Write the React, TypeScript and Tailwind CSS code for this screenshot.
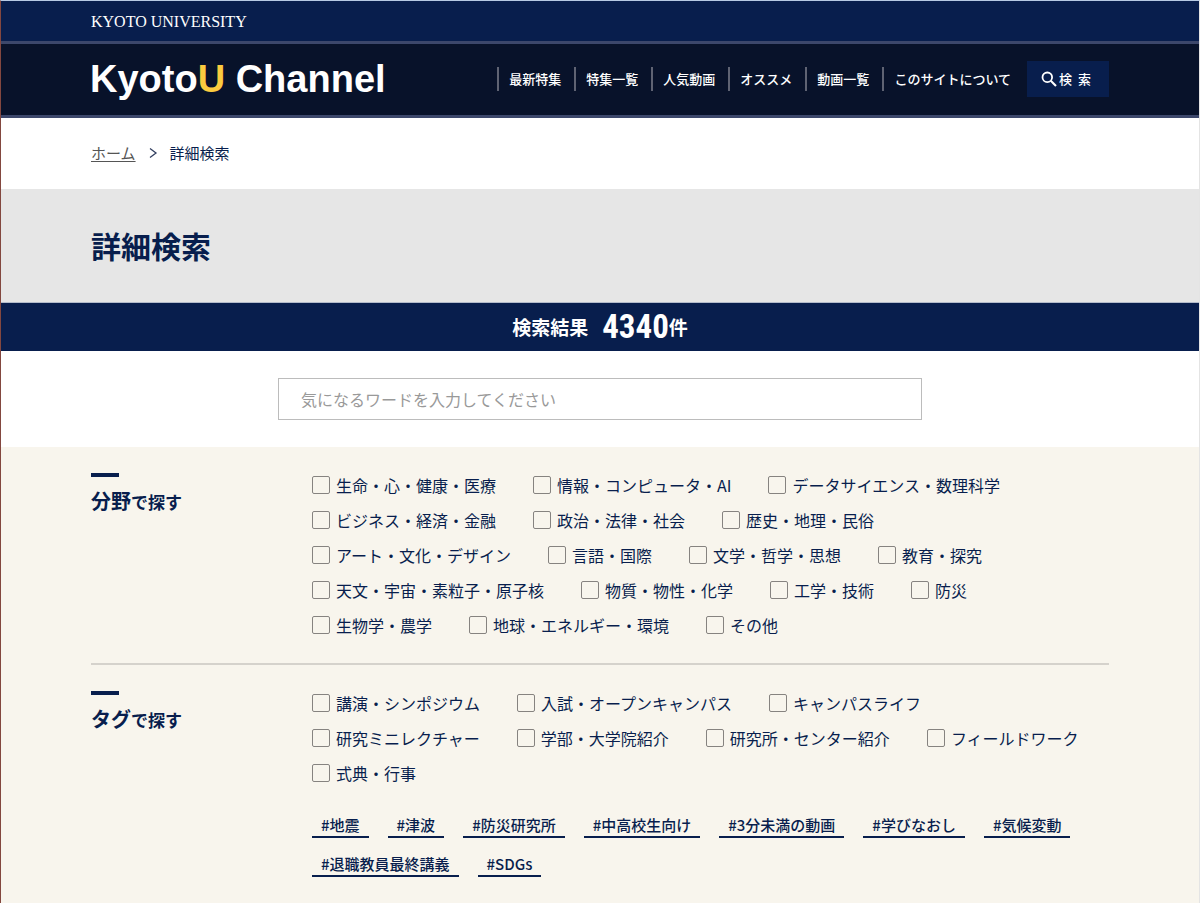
const navItems = [
  "最新特集",
  "特集一覧",
  "人気動画",
  "オススメ",
  "動画一覧",
  "このサイトについて",
];

const fields = [
  "生命・心・健康・医療",
  "情報・コンピュータ・AI",
  "データサイエンス・数理科学",
  "ビジネス・経済・金融",
  "政治・法律・社会",
  "歴史・地理・民俗",
  "アート・文化・デザイン",
  "言語・国際",
  "文学・哲学・思想",
  "教育・探究",
  "天文・宇宙・素粒子・原子核",
  "物質・物性・化学",
  "工学・技術",
  "防災",
  "生物学・農学",
  "地球・エネルギー・環境",
  "その他",
];

const categories = [
  "講演・シンポジウム",
  "入試・オープンキャンパス",
  "キャンパスライフ",
  "研究ミニレクチャー",
  "学部・大学院紹介",
  "研究所・センター紹介",
  "フィールドワーク",
  "式典・行事",
];

const hashtags = [
  "#地震",
  "#津波",
  "#防災研究所",
  "#中高校生向け",
  "#3分未満の動画",
  "#学びなおし",
  "#気候変動",
  "#退職教員最終講義",
  "#SDGs",
];

function CheckList({ items, name }: { items: string[]; name: string }) {
  return (
    <ul className="flex flex-wrap gap-x-[37px] gap-y-[11px]">
      {items.map((item) => (
        <li key={item}>
          <label className="flex items-center gap-1.5 text-base leading-6 whitespace-nowrap">
            <input
              type="checkbox"
              name={name}
              value={item}
              className="size-[18px] shrink-0 appearance-none rounded-[2px] border border-[#868380] checked:bg-[#081e4d]"
            />
            {item}
          </label>
        </li>
      ))}
    </ul>
  );
}

function SectionHeading({ lead, rest }: { lead: string; rest: string }) {
  return (
    <div className="w-[221px] shrink-0">
      <div className="h-1 w-7 bg-[#081e4d]" />
      <h2 className="mt-2 text-[17px] leading-8 font-bold">
        <span className="text-xl leading-8">{lead}</span>
        {rest}
      </h2>
    </div>
  );
}

export default function App() {
  return (
    <div className="min-h-screen border-t border-r border-l border-t-[#b7cae4] border-r-[#e4e4e4] border-l-[#83473f] bg-[#f8f5ed] font-['Noto_Sans_CJK_JP',sans-serif] text-[#081e4d]">
      <header className="text-white">
        <div className="flex h-10 items-center bg-[#081e4d] px-[90px] pt-0.5">
          <a href="#university" className="font-['Liberation_Serif',serif] text-base leading-6">
            KYOTO UNIVERSITY
          </a>
        </div>
        <div className="flex items-center justify-between border-t-[3px] border-b-[3px] border-[#3c476b] bg-[#08122a] pt-[17px] pr-[90px] pb-[18px] pl-[89px]">
          <a
            href="#top"
            className="font-['Liberation_Sans',sans-serif] text-[38px] leading-9 font-bold whitespace-nowrap"
          >
            Kyoto<span className="text-[#fbcb3f]">U</span> Channel
          </a>
          <nav className="flex items-center gap-[3px]">
            <ul className="flex">
              {navItems.map((item) => (
                <li key={item} className="flex h-6 items-center border-l-2 border-[#5f6373]">
                  <a
                    href="#nav"
                    className="pr-[13px] pl-2.5 text-[13px] leading-6 font-medium whitespace-nowrap"
                  >
                    {item}
                  </a>
                </li>
              ))}
            </ul>
            <button
              type="button"
              className="flex h-9 w-[82px] items-center justify-center gap-0.5 bg-[#081e4d] pr-1 text-[13px] font-medium"
            >
              <svg viewBox="0 0 16 16" className="size-4" fill="none" stroke="currentColor" strokeWidth="1.8">
                <circle cx="6.3" cy="6.3" r="4.8" />
                <path d="M9.8 9.8 L15 15" strokeWidth="2.1" />
              </svg>
              <span className="flex gap-1.5">
                <span>検</span>
                <span>索</span>
              </span>
            </button>
          </nav>
        </div>
      </header>

      <main>
        <nav
          aria-label="パンくず"
          className="flex h-[71px] items-center gap-3 bg-white px-[90px] pb-0.5 text-[15px] leading-6"
        >
          <a href="#home" className="text-[#555] underline underline-offset-2">
            ホーム
          </a>
          <svg viewBox="0 0 10 12" className="h-3 w-2.5" fill="none" stroke="#333f60" strokeWidth="1.3">
            <path d="M2 1.5 L8 6 L2 10.5" />
          </svg>
          <span>詳細検索</span>
        </nav>

        <div className="border-b border-[#b4bccb] bg-[#e6e6e6] px-[90px] pt-[35px] pb-9">
          <h1 className="text-[30px] leading-[42px] font-bold">詳細検索</h1>
        </div>

        <p className="flex h-12 items-center justify-center bg-[#081e4d] text-[19px] font-bold text-white">
          検索結果
          <span className="ml-3.5 font-['Roboto_Condensed',Roboto,sans-serif] text-[33px] leading-10">
            4340
          </span>
          件
        </p>

        <form className="flex justify-center bg-white px-8 py-[27px]">
          <input
            type="text"
            aria-label="キーワード"
            placeholder="気になるワードを入力してください"
            className="h-[42px] w-full max-w-[644px] border border-[#bcbcbc] bg-white px-[22px] text-base outline-none placeholder:text-[#999]"
          />
        </form>

        <div className="px-[90px]">
          <section className="flex border-b-2 border-[#d5d2cc] py-[26px]">
            <SectionHeading lead="分野" rest="で探す" />
            <CheckList items={fields} name="field" />
          </section>
          <section className="flex py-[26px]">
            <SectionHeading lead="タグ" rest="で探す" />
            <div>
              <CheckList items={categories} name="category" />
              <ul className="mt-7 flex flex-wrap gap-x-[19px] gap-y-3.5">
                {hashtags.map((tag) => (
                  <li key={tag}>
                    <a
                      href="#tag"
                      className="block border-b-2 border-[#081e4d] px-[9px] text-[15px] leading-[23px] font-medium whitespace-nowrap"
                    >
                      {tag}
                    </a>
                  </li>
                ))}
              </ul>
            </div>
          </section>
        </div>
      </main>
    </div>
  );
}
